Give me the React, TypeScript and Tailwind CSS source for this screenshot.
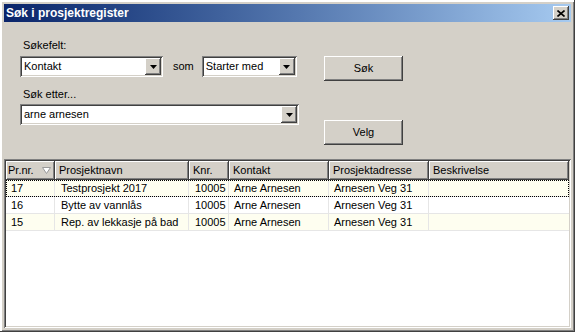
import type { JSX } from "react";

const raised =
  "shadow-[inset_-1px_-1px_0_#404040,inset_1px_1px_0_#ffffff,inset_-2px_-2px_0_#808080,inset_2px_2px_0_#d4d0c8]";
const sunken =
  "shadow-[inset_1px_1px_0_#808080,inset_-1px_-1px_0_#ffffff,inset_2px_2px_0_#404040,inset_-2px_-2px_0_#d4d0c8]";

interface Row {
  nr: string;
  navn: string;
  knr: string;
  kontakt: string;
  adresse: string;
  beskrivelse: string;
}

const rows: Row[] = [
  { nr: "17", navn: "Testprosjekt 2017", knr: "10005", kontakt: "Arne Arnesen", adresse: "Arnesen Veg 31", beskrivelse: "" },
  { nr: "16", navn: "Bytte av vannlås", knr: "10005", kontakt: "Arne Arnesen", adresse: "Arnesen Veg 31", beskrivelse: "" },
  { nr: "15", navn: "Rep. av lekkasje på bad", knr: "10005", kontakt: "Arne Arnesen", adresse: "Arnesen Veg 31", beskrivelse: "" },
];

const columns = [
  { title: "Prosjektnavn", width: "w-[134px]" },
  { title: "Knr.", width: "w-[40px]" },
  { title: "Kontakt", width: "w-[100px]" },
  { title: "Prosjektadresse", width: "w-[100px]" },
];

function Combo({ value, width }: { value: string; width: string }): JSX.Element {
  return (
    <div className={`flex h-[21px] bg-white p-[2px] ${sunken} ${width}`}>
      <div className="flex flex-1 items-center pl-[2px] leading-none">{value}</div>
      <div className={`flex h-[17px] w-[16px] items-center justify-center bg-[#d4d0c8] ${raised}`}>
        <svg width="7" height="4" viewBox="0 0 7 4">
          <polygon points="0,0 7,0 3.5,4" fill="#000" />
        </svg>
      </div>
    </div>
  );
}

function Button({ label }: { label: string }): JSX.Element {
  return (
    <div className={`flex h-[25px] w-[79px] items-center justify-center bg-[#d4d0c8] ${raised}`}>
      {label}
    </div>
  );
}

export default function App(): JSX.Element {
  return (
    <div
      className={`flex h-[332px] w-[575px] flex-col bg-[#d4d0c8] p-[4px] font-['Liberation_Sans',Arial,sans-serif] text-[11px] text-black shadow-[inset_-1px_-1px_0_#404040,inset_2px_2px_0_#ffffff,inset_-2px_-2px_0_#808080]`}
    >
      {/* title bar */}
      <div className="flex h-[18px] items-center bg-linear-to-r from-[#0a246a] to-[#a6caf0] pl-[2px] pr-[2px]">
        <span className="flex-1 text-[12px] font-bold leading-none text-white">Søk i prosjektregister</span>
        <div className={`flex h-[14px] w-[16px] items-center justify-center bg-[#d4d0c8] ${raised}`}>
          <svg width="8" height="7" viewBox="0 0 8 7">
            <path d="M0.5 0.5 L7.5 6.5 M7.5 0.5 L0.5 6.5" stroke="#000" strokeWidth="1.6" />
          </svg>
        </div>
      </div>

      <div className="flex flex-1 flex-col">
        {/* search form */}
        <div className="flex pl-[16px] pt-[17px]">
          <div className="w-[304px]">
            <div className="h-[13px] pl-[3px] leading-[13px]">Søkefelt:</div>
            <div className="mt-[4px] flex items-center">
              <Combo value="Kontakt" width="w-[143px]" />
              <span className="ml-[10px]">som</span>
              <div className="ml-[8px]">
                <Combo value="Starter med" width="w-[95px]" />
              </div>
            </div>
            <div className="mt-[11px] h-[13px] pl-[3px] leading-[13px]">Søk etter...</div>
            <div className="mt-[3px]">
              <Combo value="arne arnesen" width="w-[279px]" />
            </div>
          </div>
          <div className="flex flex-col pt-[17px]">
            <Button label="Søk" />
            <div className="mt-[39px]">
              <Button label="Velg" />
            </div>
          </div>
        </div>

        {/* result list */}
        <div className={`mt-[14px] flex flex-1 flex-col bg-white p-[2px] ${sunken}`}>
          <div className="flex h-[19px] bg-[#d4d0c8]">
            <div className={`flex w-[49px] items-center pl-[2px] pr-[4px] ${raised}`}>
              <span className="flex-1">Pr.nr.</span>
              <svg width="9" height="7" viewBox="0 0 9 7">
                <path d="M0.5 0.5 H8.5 L4.5 6.5 Z" fill="#fff" stroke="#9a9a9a" strokeWidth="1" />
              </svg>
            </div>
            {columns.map((c) => (
              <div key={c.title} className={`flex items-center pl-[4px] ${c.width} ${raised}`}>
                {c.title}
              </div>
            ))}
            <div className={`flex flex-1 items-center pl-[4px] ${raised}`}>Beskrivelse</div>
          </div>
          {rows.map((r, i) => (
            <div
              key={r.nr}
              className={`flex h-[17px] items-center border-b border-[#e6e6e6] ${
                i % 2 === 0 ? "bg-[#fefef0]" : "bg-white"
              } ${i === 0 ? "outline-1 -outline-offset-1 outline-dotted outline-black" : ""}`}
            >
              <div className="flex h-full w-[49px] items-center border-r border-[#e6e6e6] pl-[5px]">{r.nr}</div>
              <div className="flex h-full w-[134px] items-center border-r border-[#e6e6e6] pl-[6px]">{r.navn}</div>
              <div className="flex h-full w-[40px] items-center border-r border-[#e6e6e6] pl-[6px]">{r.knr}</div>
              <div className="flex h-full w-[100px] items-center border-r border-[#e6e6e6] pl-[5px]">{r.kontakt}</div>
              <div className="flex h-full w-[100px] items-center border-r border-[#e6e6e6] pl-[5px]">{r.adresse}</div>
              <div className="flex h-full flex-1 items-center pl-[5px]">{r.beskrivelse}</div>
            </div>
          ))}
        </div>
      </div>
    </div>
  );
}
